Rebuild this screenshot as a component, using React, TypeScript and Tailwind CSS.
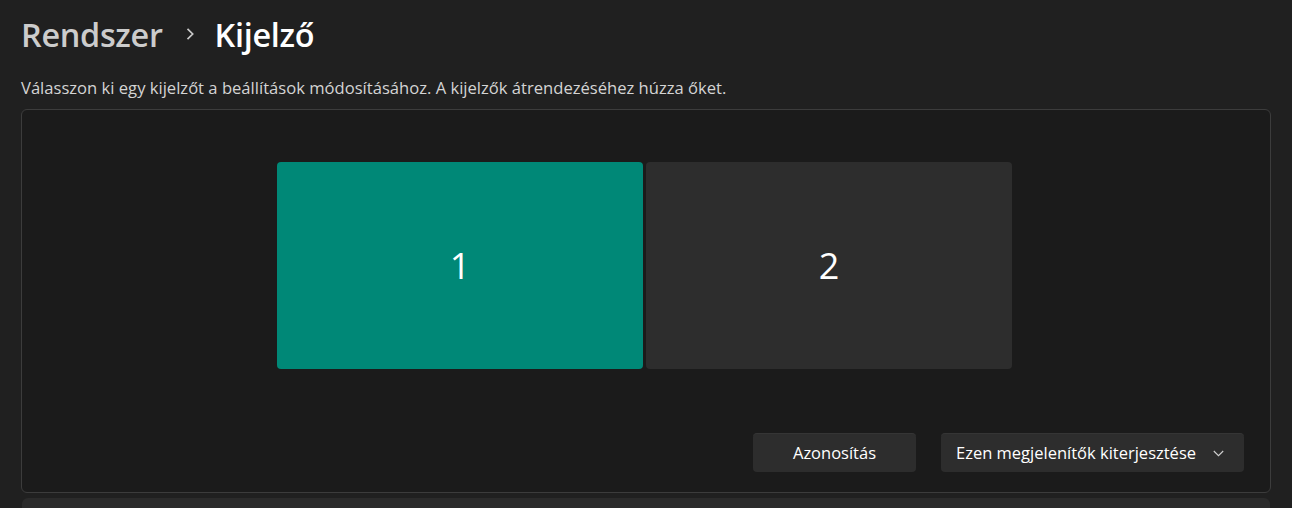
import React from "react";

export default function App() {
  const font = { fontFamily: '"Open Sans", "Noto Sans", "Liberation Sans", sans-serif' };
  return (
    <div
      className="w-[1292px] h-[508px] bg-[#202020] overflow-hidden flex flex-col px-[21px] text-white"
      style={font}
    >
      <div className="flex items-center h-[64px] pt-[4px] shrink-0">
        <span className="text-[32.4px] font-semibold text-[#cccccc] tracking-[-0.3px]">Rendszer</span>
        <svg className="ml-[22px] mr-[20px]" width="10" height="14" viewBox="0 0 10 14">
          <path d="M2.5 1.8 L7.7 7 L2.5 12.2" fill="none" stroke="#c8c8c8" strokeWidth="1.7" />
        </svg>
        <span className="text-[32.4px] font-semibold text-white tracking-[-0.3px]">Kijelző</span>
      </div>
      <p className="mt-[13px] text-[16.6px] leading-[22px] text-[#d4d4d4] shrink-0">
        Válasszon ki egy kijelzőt a beállítások módosításához. A kijelzők átrendezéséhez húzza őket.
      </p>
      <div className="mt-[10px] h-[384px] shrink-0 rounded-[6px] border border-[#3c3c3c] bg-[#1b1b1b] flex flex-col">
        <div className="flex gap-[3px] pl-[255px] pt-[52px]">
          <div className="w-[366px] h-[207px] rounded-[4px] bg-[#008877] flex items-center justify-center">
            <span className="text-[36px] text-white font-normal">1</span>
          </div>
          <div className="w-[366px] h-[207px] rounded-[4px] bg-[#2d2d2d] flex items-center justify-center">
            <span className="text-[36px] text-white font-normal">2</span>
          </div>
        </div>
        <div className="flex justify-end gap-[25px] pr-[26px] mt-auto mb-[20px]">
          <button className="w-[163px] h-[39px] rounded-[4px] bg-[#2d2d2d] border-t border-[#353535] text-[16.5px] text-white">
            Azonosítás
          </button>
          <button className="w-[303px] h-[39px] rounded-[4px] bg-[#2d2d2d] border-t border-[#353535] text-[16.5px] text-white flex items-center pl-[15px] pr-[20px]">
            <span className="flex-1 text-left">Ezen megjelenítők kiterjesztése</span>
            <svg width="11" height="7" viewBox="0 0 11 7">
              <path d="M0.8 1 L5.5 5.7 L10.2 1" fill="none" stroke="#d0d0d0" strokeWidth="1.1" />
            </svg>
          </button>
        </div>
      </div>
      <div className="mt-[5px] mx-[1px] h-[20px] shrink-0 rounded-t-[6px] bg-[#2b2b2b]" />
    </div>
  );
}
